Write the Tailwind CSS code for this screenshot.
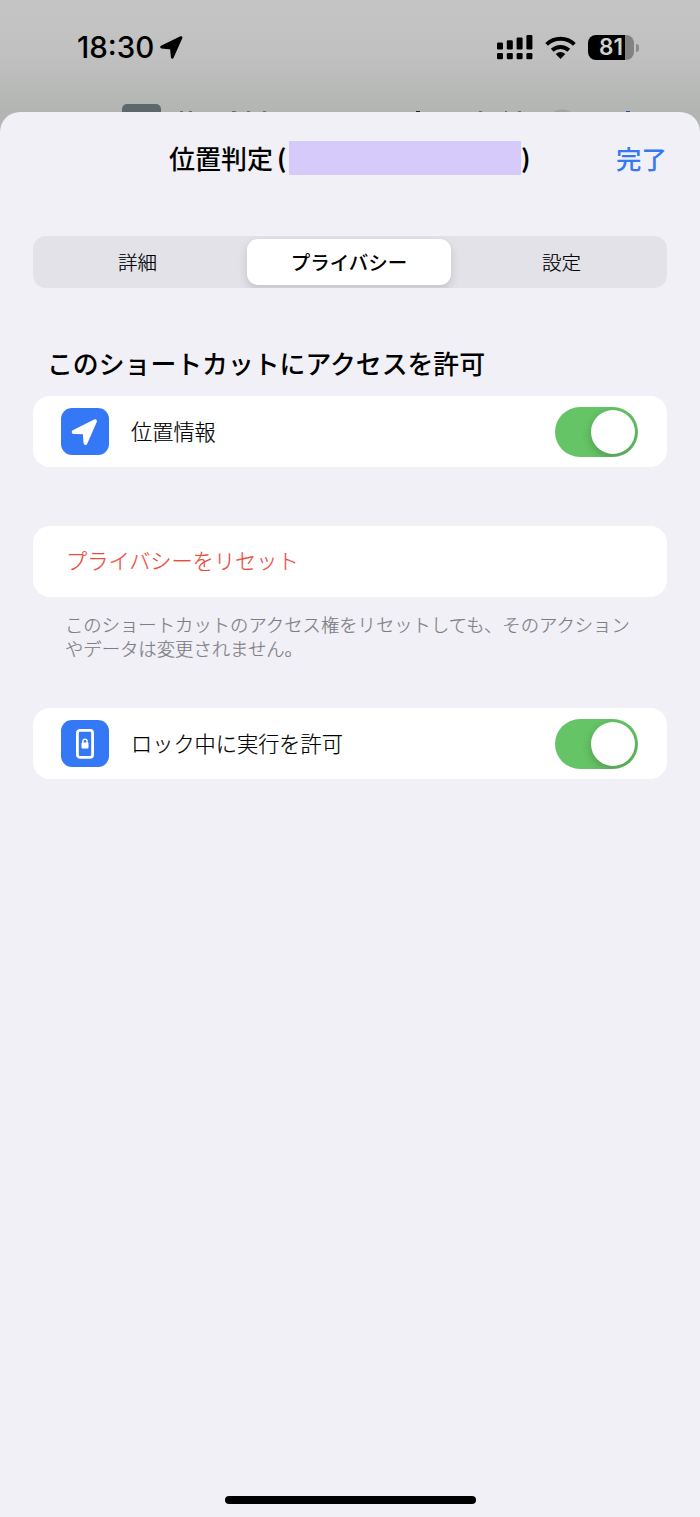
<!DOCTYPE html>
<html lang="ja">
<head>
  <meta charset="UTF-8" />
  <meta name="viewport" content="width=device-width, initial-scale=1.0"/>
  <title>位置判定</title>
  <script src="https://cdn.jsdelivr.net/npm/@tailwindcss/browser@4"></script>
</head>
<body class="h-[1517px] w-[700px] overflow-hidden flex flex-col bg-[#b2b5b1] text-black font-['Noto_Sans_CJK_JP',sans-serif]">
  <!-- status bar -->
  <header class="relative h-28 shrink-0 bg-linear-to-b from-[#c5c5c5] via-[#c0c0c0] to-[#b2b5b1] flex justify-between pl-[77px] pr-[61px] pb-[17px] items-center">
    <div class="flex items-center gap-[6px]">
      <span class="pt-px font-['Inter',sans-serif] text-[29.5px] leading-none font-medium">18:30</span>
      <svg viewBox="0 0 23 23" class="w-[23px] h-[23px]">
        <path d="M1.6 11 21 1.6 12.3 21.2 11.4 12Z" fill="#000" stroke="#000" stroke-width="2.8" stroke-linejoin="round"/>
      </svg>
    </div>
    <div class="flex items-center gap-3">
      <svg viewBox="0 0 36 25" class="w-9 h-[25px]">
        <rect x="0" y="7.5" width="6" height="7" rx="1.3"/>
        <rect x="9.8" y="5.3" width="6" height="9.2" rx="1.3"/>
        <rect x="19.6" y="2.5" width="6" height="12" rx="1.3"/>
        <rect x="29.4" y="0" width="6" height="14.5" rx="1.3"/>
        <rect x="0" y="18" width="6" height="6.3" rx="1.3"/>
        <rect x="9.8" y="18" width="6" height="6.3" rx="1.3"/>
        <rect x="19.6" y="18" width="6" height="6.3" rx="1.3"/>
        <rect x="29.4" y="18" width="6" height="6.3" rx="1.3"/>
      </svg>
      <svg viewBox="0 0 31 23" class="w-[31px] h-[23px]" fill="none" stroke="#000" stroke-width="4">
        <path d="M1.6 8.4a20.2 20.2 0 0 1 27.8 0"/>
        <path d="M7.2 14.2a12.2 12.2 0 0 1 16.6 0"/>
        <path d="M10.7 18a7 7 0 0 1 9.6 0L15.5 23Z" fill="#000" stroke="none"/>
      </svg>
      <div class="flex items-center gap-[2px]">
        <div class="w-[46px] h-[25px] rounded-[8px] bg-linear-to-r from-black from-[81%] to-[#828282] to-[81%] flex items-center justify-center">
          <span class="font-['Inter',sans-serif] text-[22.5px] leading-none font-semibold text-[#d0d0d0]">81</span>
        </div>
        <div class="w-[3px] h-[8px] rounded-r-full bg-[#8b8b8b]"></div>
      </div>
    </div>

    <!-- row of the page behind the sheet -->
    <svg viewBox="0 0 700 10" class="absolute left-0 bottom-0 w-[700px] h-[10px]">
      <path d="M122 10V7a5 5 0 0 1 5-5h29a5 5 0 0 1 5 5v3Z" fill="#5c6869"/>
      <g fill="#6a6c69">
        <rect x="180" y="9" width="3" height="1"/>
        <rect x="189" y="9" width="3" height="1"/>
        <rect x="232" y="9" width="4" height="1"/>
        <rect x="247" y="9" width="3" height="1"/>
        <rect x="263" y="9" width="3" height="1"/>
        <rect x="416" y="9" width="4" height="1" fill="#222"/>
        <rect x="479" y="9" width="3" height="1"/>
        <rect x="505" y="9" width="2" height="1"/>
        <rect x="518" y="9" width="3" height="1"/>
      </g>
      <ellipse cx="562" cy="12" rx="9" ry="4.5" fill="#a0a29f"/>
      <rect x="626" y="9" width="4" height="1" fill="#1f4fb0"/>
    </svg>
  </header>

  <main class="flex-1 flex flex-col rounded-t-[20px] bg-[#f1f0f6] px-[33px]">
    <div class="h-[92px] grid grid-cols-[1fr_auto_1fr] items-center">
      <span></span>
      <h1 class="flex items-center text-[26px] leading-none font-medium">
        <span class="pb-px">位置判定</span>
        <span class="ml-[4px] w-[12px] pb-[2px] font-bold text-[25px]">(</span>
        <span class="w-[232px] h-[34px] bg-[#d6cafb]"></span>
        <span class="w-[10px] pb-[2px] font-bold text-[25px]">)</span>
      </h1>
      <button class="justify-self-end pb-px text-[25.5px] leading-none font-medium text-[#3478f6]">完了</button>
    </div>

    <nav class="mt-8 h-[52px] shrink-0 rounded-[13px] bg-[#e3e2e8] grid grid-cols-[1fr_204px_1fr] items-center px-[3px] py-[3px] overflow-hidden text-[19.5px] leading-none text-center">
      <button class="pr-[9px] font-light [-webkit-text-stroke:0.2px]">詳細</button>
      <button class="h-[46px] rounded-[11px] bg-white font-medium shadow-[0_4px_10px_rgba(0,0,0,0.14)] -ml-px mr-px">プライバシー</button>
      <button class="pl-[7px] font-light [-webkit-text-stroke:0.2px]">設定</button>
    </nav>

    <h2 class="mt-[58px] h-[50px] pl-[14px] pt-[4px] text-[25.85px] leading-[26px] font-medium">このショートカットにアクセスを許可</h2>

    <section class="h-[71px] shrink-0 rounded-[17px] bg-white flex items-center pl-7 pr-[29px]">
      <div class="w-[48px] h-[47px] rounded-[11px] bg-[#3478f6] flex items-center justify-center">
        <svg viewBox="0 0 28 28" class="w-7 h-7">
          <path d="M2.600 14 24 3.200 14.500 25 13.600 14.400Z" fill="#fff" stroke="#fff" stroke-width="3.8" stroke-linejoin="round"/>
        </svg>
      </div>
      <span class="ml-[22px] pb-px flex-1 text-[21.2px] leading-none font-light [-webkit-text-stroke:0.2px]">位置情報</span>
      <div class="mt-px w-[83px] h-[50px] rounded-full bg-[#65c466] flex items-center justify-end pr-[3px] overflow-hidden">
        <div class="w-[44px] h-[44px] rounded-full bg-white shadow-[0_3px_10px_rgba(0,0,0,0.22)]"></div>
      </div>
    </section>

    <section class="mt-[59px] h-[71px] shrink-0 rounded-[17px] bg-white flex items-center px-[33px]">
      <button class="pb-[3px] text-[21.2px] leading-none font-light text-[#eb4b3d] [-webkit-text-stroke:0.2px]">プライバシーをリセット</button>
    </section>
    <p class="mt-[15px] h-24 px-[32px] text-[18.35px] leading-6 font-light text-[#7d7d83] whitespace-nowrap [-webkit-text-stroke:0.2px]">このショートカットのアクセス権をリセットしても、そのアクション<br>やデータは変更されません。</p>

    <section class="h-[71px] shrink-0 rounded-[17px] bg-white flex items-center pl-7 pr-[29px]">
      <div class="w-[48px] h-[47px] rounded-[11px] bg-[#3478f6] flex items-center justify-center">
        <svg viewBox="0 0 18 30" class="w-[18px] h-[30px]">
          <rect x="1.4" y="1.3" width="15.2" height="27" rx="2.6" fill="none" stroke="#fff" stroke-width="2.8"/>
          <rect x="5.5" y="13.4" width="7" height="6.2" rx="1" fill="#fff"/>
          <path d="M6.900 14v-1.600a2.100 2.100 0 0 1 4.200 0V14" fill="none" stroke="#fff" stroke-width="1.400"/>
        </svg>
      </div>
      <span class="ml-[22px] pb-px flex-1 text-[21.2px] leading-none font-light [-webkit-text-stroke:0.2px]">ロック中に実行を許可</span>
      <div class="mt-px w-[83px] h-[50px] rounded-full bg-[#65c466] flex items-center justify-end pr-[3px] overflow-hidden">
        <div class="w-[44px] h-[44px] rounded-full bg-white shadow-[0_3px_10px_rgba(0,0,0,0.22)]"></div>
      </div>
    </section>

    <!-- home indicator -->
    <div class="mt-auto mb-[13px] mx-auto w-[251px] h-[8px] rounded-full bg-black"></div>
  </main>
</body>
</html>
